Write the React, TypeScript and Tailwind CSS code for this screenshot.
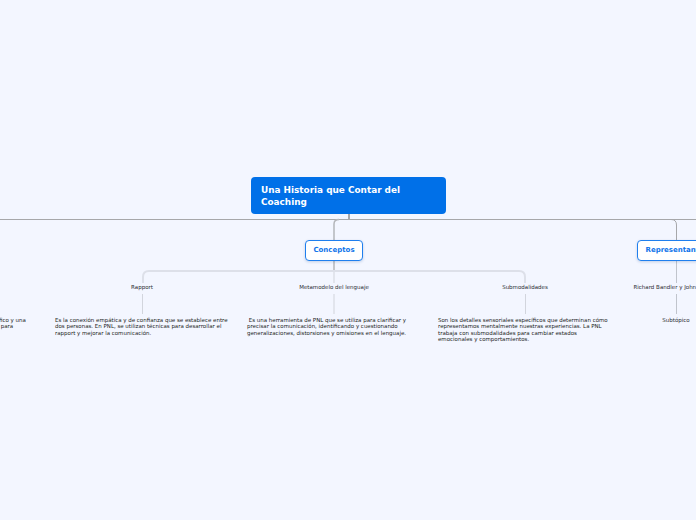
const FONT = "font-['DejaVu_Sans','Liberation_Sans',sans-serif]";

const labels = [
  { text: "Rapport", x: 142, top: 283 },
  { text: "Metamodelo del lenguaje", x: 334, top: 283 },
  { text: "Submodalidades", x: 525, top: 283 },
  { text: "Richard Bandler y John Grinder", x: 676, top: 283 },
  { text: "Subtópico", x: 676, top: 316 },
];

const notes = [
  {
    x: -1,
    w: 40,
    lines: ["fico y una", " para"],
  },
  {
    x: 55,
    w: 190,
    lines: [
      "Es la conexión empática y de confianza que se establece entre",
      "dos personas. En PNL, se utilizan técnicas para desarrollar el",
      "rapport y mejorar la comunicación.",
    ],
  },
  {
    x: 247,
    w: 190,
    lines: [
      "\u00a0Es una herramienta de PNL que se utiliza para clarificar y",
      "precisar la comunicación, identificando y cuestionando",
      "generalizaciones, distorsiones y omisiones en el lenguaje.",
    ],
  },
  {
    x: 438,
    w: 190,
    lines: [
      "Son los detalles sensoriales específicos que determinan cómo",
      "representamos mentalmente nuestras experiencias. La PNL",
      "trabaja con submodalidades para cambiar estados",
      "emocionales y comportamientos.",
    ],
  },
];

const Connectors = () => (
  <svg className="absolute left-0 top-0" width="696" height="520" fill="none">
    <path d="M0 219.5H696" stroke="#a6a7aa" />
    <path d="M349 214V219" stroke="#a6a7aa" strokeWidth="2" />
    <path d="M334 241V224Q334 219.5 339 219.5" stroke="#b4b6ba" strokeWidth="1.5" />
    <path d="M671 219.5Q676.5 219.5 676.5 225V241" stroke="#a6a7aa" />
    <path d="M334 261V272" stroke="#b4b6ba" strokeWidth="1.5" />
    <path d="M334 272V283" stroke="#dcdfe7" strokeWidth="1.5" />
    <path
      d="M143 283V277Q143 271 149 271H519Q525 271 525 277V283"
      stroke="#dde0e9"
      strokeWidth="2"
    />
    <path d="M142.5 294V314M525.5 294V314" stroke="#d2d5dd" />
    <path d="M334 294V314" stroke="#dcdfe7" strokeWidth="1.5" />
    <path d="M676.5 261V283M676.5 294V314" stroke="#c0c4cc" />
  </svg>
);

export default function App() {
  return (
    <div className={`relative h-[520px] w-[696px] overflow-hidden bg-[#f3f6ff] ${FONT}`}>
      <Connectors />

      <div className="absolute left-[251px] top-[177px] flex h-[37px] w-[195px] items-center rounded-[4px] bg-[#0070e8] pt-[2px] pl-[10px] pr-[20px] text-[8.9px] leading-[11.5px] font-bold text-white">
        Una Historia que Contar del Coaching
      </div>

      <div className="absolute left-[305px] top-[240px] flex h-[21px] w-[58px] items-center justify-center rounded-[4px] border-[1.5px] border-[#1f7fee] bg-white text-[7px] font-bold text-[#0f74ea] shadow-[0_1px_3px_rgba(0,60,140,0.2)]">
        Conceptos
      </div>

      <div className="absolute left-[637px] top-[240px] flex h-[21px] w-[90px] items-center rounded-[4px] border-[1.5px] border-[#1f7fee] bg-white pl-[7.5px] text-[7px] font-bold whitespace-nowrap text-[#0f74ea] shadow-[0_1px_3px_rgba(0,60,140,0.2)]">
        Representantes
      </div>

      {labels.map((l) => (
        <div
          key={l.text}
          className="absolute -translate-x-1/2 text-[5.5px] leading-[8px] whitespace-nowrap text-[#2b2d33]"
          style={{ left: l.x, top: l.top }}
        >
          {l.text}
        </div>
      ))}

      {notes.map((n) => (
        <div
          key={n.x}
          className="absolute top-[317px] text-[5.48px] leading-[6.4px] whitespace-pre text-[#1d1f24]"
          style={{ left: n.x, width: n.w }}
        >
          {n.lines.map((line) => (
            <div key={line}>{line}</div>
          ))}
        </div>
      ))}
    </div>
  );
}
